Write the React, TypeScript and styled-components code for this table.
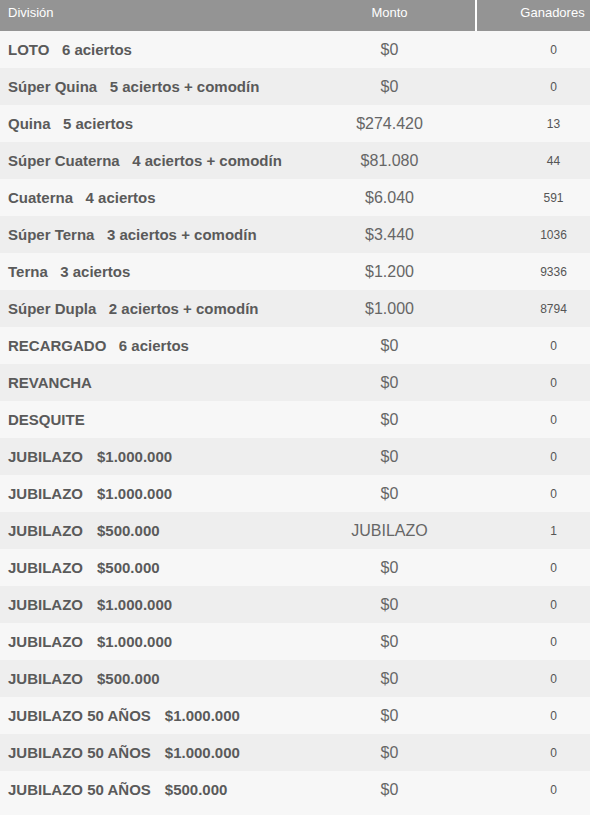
import React from "react";
import styled, { createGlobalStyle } from "styled-components";

interface IPrize {
  name: string;
  detail?: string;
  wide?: boolean;
  amount: string;
  winners: string;
}

const prizes: IPrize[] = [
  { name: "LOTO", detail: "6 aciertos", amount: "$0", winners: "0" },
  { name: "Súper Quina", detail: "5 aciertos + comodín", amount: "$0", winners: "0" },
  { name: "Quina", detail: "5 aciertos", amount: "$274.420", winners: "13" },
  { name: "Súper Cuaterna", detail: "4 aciertos + comodín", amount: "$81.080", winners: "44" },
  { name: "Cuaterna", detail: "4 aciertos", amount: "$6.040", winners: "591" },
  { name: "Súper Terna", detail: "3 aciertos + comodín", amount: "$3.440", winners: "1036" },
  { name: "Terna", detail: "3 aciertos", amount: "$1.200", winners: "9336" },
  { name: "Súper Dupla", detail: "2 aciertos + comodín", amount: "$1.000", winners: "8794" },
  { name: "RECARGADO", detail: "6 aciertos", amount: "$0", winners: "0" },
  { name: "REVANCHA", amount: "$0", winners: "0" },
  { name: "DESQUITE", amount: "$0", winners: "0" },
  { name: "JUBILAZO", detail: "$1.000.000", wide: true, amount: "$0", winners: "0" },
  { name: "JUBILAZO", detail: "$1.000.000", wide: true, amount: "$0", winners: "0" },
  { name: "JUBILAZO", detail: "$500.000", wide: true, amount: "JUBILAZO", winners: "1" },
  { name: "JUBILAZO", detail: "$500.000", wide: true, amount: "$0", winners: "0" },
  { name: "JUBILAZO", detail: "$1.000.000", wide: true, amount: "$0", winners: "0" },
  { name: "JUBILAZO", detail: "$1.000.000", wide: true, amount: "$0", winners: "0" },
  { name: "JUBILAZO", detail: "$500.000", wide: true, amount: "$0", winners: "0" },
  { name: "JUBILAZO 50 AÑOS", detail: "$1.000.000", wide: true, amount: "$0", winners: "0" },
  { name: "JUBILAZO 50 AÑOS", detail: "$1.000.000", wide: true, amount: "$0", winners: "0" },
  { name: "JUBILAZO 50 AÑOS", detail: "$500.000", wide: true, amount: "$0", winners: "0" },
];

const App: React.FC = () => {
  return (
    <>
      <GlobalStyle />
      <Table>
        <HeaderRow>
          <HeadCell>División</HeadCell>
          <HeadCell $center>Monto</HeadCell>
          <HeadCell $center $divider>
            Ganadores
          </HeadCell>
        </HeaderRow>
        {prizes.map((prize, i) => (
          <Row key={i} $striped={i % 2 === 1}>
            <Division>
              {prize.name}
              {prize.detail && <Detail $wide={prize.wide}>{prize.detail}</Detail>}
            </Division>
            <Amount>{prize.amount}</Amount>
            <Winners>{prize.winners}</Winners>
          </Row>
        ))}
      </Table>
    </>
  );
};

export default App;

const GlobalStyle = createGlobalStyle`
  html, body {
    margin: 0;
    padding: 0;
    background: #f7f7f7;
    overflow: hidden;
  }
  body {
    font-family: "Liberation Sans", Arial, sans-serif;
  }
`;

const Table = styled.div`
  width: 630px;
`;

const HeaderRow = styled.div`
  display: grid;
  grid-template-columns: 304px 171px 153px;
  height: 31px;
  background: #949494;
`;

const HeadCell = styled.div<{ $center?: boolean; $divider?: boolean }>`
  color: #fff;
  font-size: 13px;
  line-height: 14px;
  padding: 6px 0 0 ${(p) => (p.$center ? "0" : "8px")};
  text-align: ${(p) => (p.$center ? "center" : "left")};
  border-left: ${(p) => (p.$divider ? "2px solid #fff" : "none")};
`;

const Row = styled.div<{ $striped: boolean }>`
  display: grid;
  grid-template-columns: 304px 171px 155px;
  height: 37px;
  align-items: center;
  background: ${(p) => (p.$striped ? "#eeeeee" : "#f7f7f7")};
`;

const Division = styled.div`
  padding-left: 8px;
  font-size: 15px;
  font-weight: bold;
  color: #5a5a5a;
  white-space: nowrap;
`;

const Detail = styled.span<{ $wide?: boolean }>`
  margin-left: ${(p) => (p.$wide ? "14px" : "12.5px")};
`;

const Amount = styled.div`
  text-align: center;
  font-size: 16px;
  color: #666;
`;

const Winners = styled.div`
  text-align: center;
  font-size: 12px;
  color: #555;
  padding-left: 2px;
`;
